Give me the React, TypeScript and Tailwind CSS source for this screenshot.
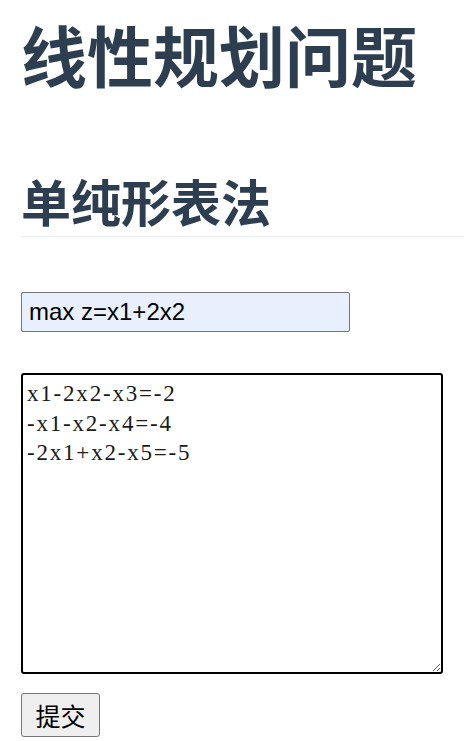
export default function App() {
  return (
    <div className="min-h-screen bg-white pl-[21px] pt-[13px] font-['Noto_Sans_CJK_SC',sans-serif]">
      <h1 className="text-[66px] leading-[80px] font-bold text-[#2c3e50]">线性规划问题</h1>
      <h2 className="mt-[77px] pb-[6px] border-b border-[#eaecef] text-[50px] leading-[60px] font-bold text-[#2c3e50]">
        单纯形表法
      </h2>
      <div className="mt-[55px] flex flex-col items-start">
        <input
          type="text"
          defaultValue="max z=x1+2x2"
          className="w-[329px] h-[40px] bg-[#e8f0fe] border border-[#767676] rounded-[2px] px-[7px] text-[24px] text-black outline-none font-['Liberation_Sans',Arial,sans-serif]"
        />
        <textarea
          defaultValue={"x1-2x2-x3=-2\n-x1-x2-x4=-4\n-2x1+x2-x5=-5"}
          className="mt-[41px] w-[422px] h-[301px] border-2 border-black rounded-[3px] px-[4px] py-[4px] text-[23px] leading-[29.5px] tracking-[1.8px] text-[#1a1a1a] outline-none resize font-['Liberation_Serif','Times_New_Roman',serif]"
        />
        <button
          type="button"
          className="mt-[19px] w-[79px] h-[44px] bg-[#efefef] border border-[#767676] rounded-[3px] text-[25px] leading-none text-black"
        >
          提交
        </button>
      </div>
    </div>
  )
}
